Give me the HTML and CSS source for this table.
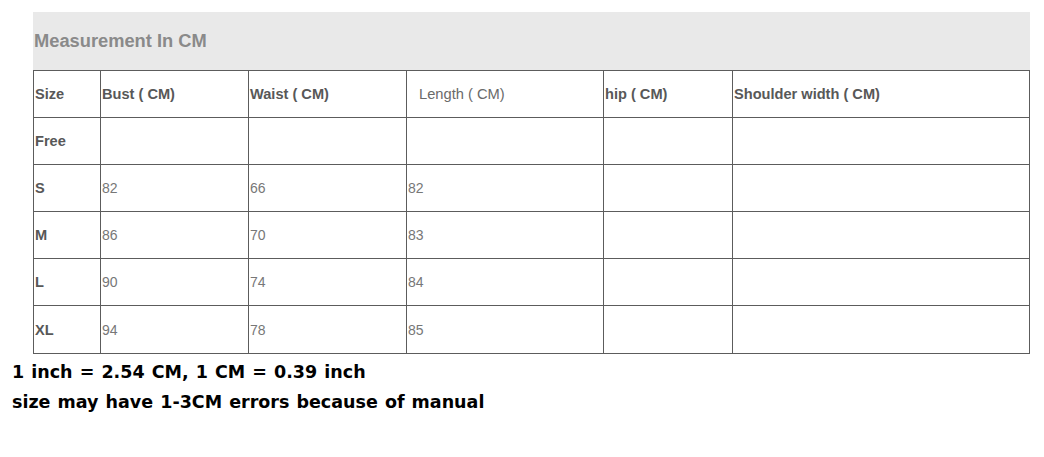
FILE: index.html
```html
<!DOCTYPE html>
<html>
<head>
<meta charset="utf-8">
<link rel="stylesheet" href="styles.css">
</head>
<body>
<div class="page">
  <div class="chart">
    <div class="title">Measurement In CM</div>
    <div class="grid">
      <div class="cell th">Size</div>
      <div class="cell th">Bust ( CM)</div>
      <div class="cell th">Waist ( CM)</div>
      <div class="cell th light">Length ( CM)</div>
      <div class="cell th">hip ( CM)</div>
      <div class="cell th">Shoulder width ( CM)</div>

      <div class="cell th">Free</div>
      <div class="cell"></div>
      <div class="cell"></div>
      <div class="cell"></div>
      <div class="cell"></div>
      <div class="cell"></div>

      <div class="cell th">S</div>
      <div class="cell">82</div>
      <div class="cell">66</div>
      <div class="cell">82</div>
      <div class="cell"></div>
      <div class="cell"></div>

      <div class="cell th">M</div>
      <div class="cell">86</div>
      <div class="cell">70</div>
      <div class="cell">83</div>
      <div class="cell"></div>
      <div class="cell"></div>

      <div class="cell th">L</div>
      <div class="cell">90</div>
      <div class="cell">74</div>
      <div class="cell">84</div>
      <div class="cell"></div>
      <div class="cell"></div>

      <div class="cell th">XL</div>
      <div class="cell">94</div>
      <div class="cell">78</div>
      <div class="cell">85</div>
      <div class="cell"></div>
      <div class="cell"></div>
    </div>
  </div>
  <div class="notes">
    <p class="note">1 inch = 2.54 CM, 1 CM = 0.39 inch</p>
    <p class="note">size may have 1-3CM errors because of manual</p>
  </div>
</div>
</body>
</html>
```

FILE: styles.css
```css
html, body {
  margin: 0;
  padding: 0;
  background: #ffffff;
}
.page {
  width: 1044px;
  height: 457px;
  padding-top: 12px;
  box-sizing: border-box;
  font-family: "Liberation Sans", Arial, sans-serif;
}
.chart {
  margin-left: 33px;
  width: 997px;
}
.title {
  height: 58px;
  background: #e9e9e9;
  color: #8a8a8a;
  font-weight: bold;
  font-size: 18.3px;
  line-height: 58px;
  padding-left: 1px;
}
.grid {
  display: grid;
  grid-template-columns: 66px 147px 157px 196px 128px 296px;
  grid-template-rows: 46px 46px 46px 46px 46px 47px;
  gap: 1px;
  padding: 1px;
  background: #5c5c5c;
}
.cell {
  background: #ffffff;
  display: flex;
  align-items: center;
  padding-left: 1px;
  font-size: 14px;
  color: #777777;
}
.th {
  font-weight: bold;
  color: #585858;
  font-size: 14.6px;
}
.light {
  font-weight: normal;
  color: #6a6a6a;
  font-size: 14.7px;
  padding-left: 12px;
}
.notes {
  padding-left: 12px;
  padding-top: 3px;
}
.note {
  margin: 0;
  font-family: "DejaVu Sans", sans-serif;
  font-weight: bold;
  font-size: 17.5px;
  word-spacing: 1px;
  line-height: 30px;
  color: #000000;
}
```
